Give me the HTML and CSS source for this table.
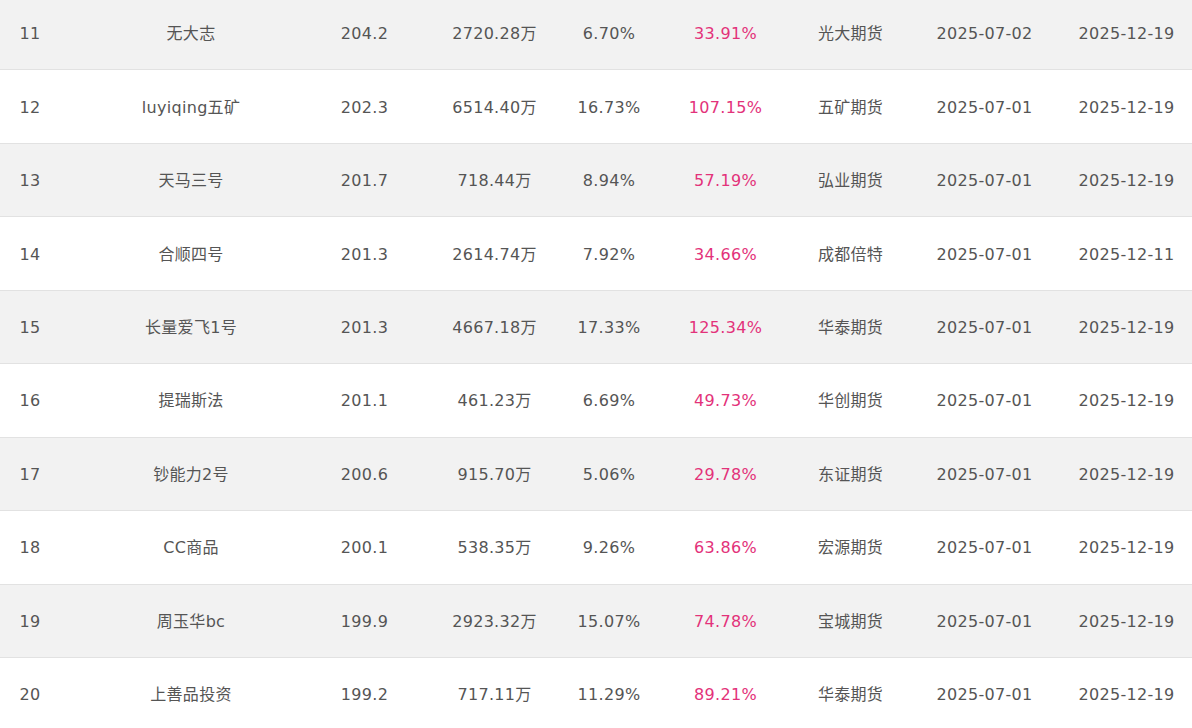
FILE: index.html
```html
<!DOCTYPE html>
<html lang="zh-CN">
<head>
<meta charset="utf-8">
<title>排行榜</title>
<link rel="stylesheet" href="styles.css">
</head>
<body>
<div class="table">
  <div class="row odd"><div class="c rank">11</div><div class="c name">无大志</div><div class="c">204.2</div><div class="c amt">2720.28万</div><div class="c">6.70%</div><div class="c pink">33.91%</div><div class="c">光大期货</div><div class="c">2025-07-02</div><div class="c">2025-12-19</div></div>
  <div class="row"><div class="c rank">12</div><div class="c name">luyiqing五矿</div><div class="c">202.3</div><div class="c amt">6514.40万</div><div class="c">16.73%</div><div class="c pink">107.15%</div><div class="c">五矿期货</div><div class="c">2025-07-01</div><div class="c">2025-12-19</div></div>
  <div class="row odd"><div class="c rank">13</div><div class="c name">天马三号</div><div class="c">201.7</div><div class="c amt">718.44万</div><div class="c">8.94%</div><div class="c pink">57.19%</div><div class="c">弘业期货</div><div class="c">2025-07-01</div><div class="c">2025-12-19</div></div>
  <div class="row"><div class="c rank">14</div><div class="c name">合顺四号</div><div class="c">201.3</div><div class="c amt">2614.74万</div><div class="c">7.92%</div><div class="c pink">34.66%</div><div class="c">成都倍特</div><div class="c">2025-07-01</div><div class="c">2025-12-11</div></div>
  <div class="row odd"><div class="c rank">15</div><div class="c name">长量爱飞1号</div><div class="c">201.3</div><div class="c amt">4667.18万</div><div class="c">17.33%</div><div class="c pink">125.34%</div><div class="c">华泰期货</div><div class="c">2025-07-01</div><div class="c">2025-12-19</div></div>
  <div class="row"><div class="c rank">16</div><div class="c name">提瑞斯法</div><div class="c">201.1</div><div class="c amt">461.23万</div><div class="c">6.69%</div><div class="c pink">49.73%</div><div class="c">华创期货</div><div class="c">2025-07-01</div><div class="c">2025-12-19</div></div>
  <div class="row odd"><div class="c rank">17</div><div class="c name">钞能力2号</div><div class="c">200.6</div><div class="c amt">915.70万</div><div class="c">5.06%</div><div class="c pink">29.78%</div><div class="c">东证期货</div><div class="c">2025-07-01</div><div class="c">2025-12-19</div></div>
  <div class="row"><div class="c rank">18</div><div class="c name">CC商品</div><div class="c">200.1</div><div class="c amt">538.35万</div><div class="c">9.26%</div><div class="c pink">63.86%</div><div class="c">宏源期货</div><div class="c">2025-07-01</div><div class="c">2025-12-19</div></div>
  <div class="row odd"><div class="c rank">19</div><div class="c name">周玉华bc</div><div class="c">199.9</div><div class="c amt">2923.32万</div><div class="c">15.07%</div><div class="c pink">74.78%</div><div class="c">宝城期货</div><div class="c">2025-07-01</div><div class="c">2025-12-19</div></div>
  <div class="row"><div class="c rank">20</div><div class="c name">上善品投资</div><div class="c">199.2</div><div class="c amt">717.11万</div><div class="c">11.29%</div><div class="c pink">89.21%</div><div class="c">华泰期货</div><div class="c">2025-07-01</div><div class="c">2025-12-19</div></div>
</div>
</body>
</html>
```
FILE: styles.css
```css
html, body {
  margin: 0;
  padding: 0;
  background: #ffffff;
}
body {
  font-family: "DejaVu Sans", "Noto Sans CJK SC", sans-serif;
  font-size: 16px;
  color: #555555;
  overflow: hidden;
}
.table {
  margin-top: -3px;
}
.row {
  display: grid;
  grid-template-columns: 60px 262px 85px 153px 98px 135px 115px 153px 131px;
  height: 73.44px;
  box-sizing: border-box;
  border-bottom: 1px solid #e2e2e2;
  background: #ffffff;
}
.row.odd {
  background: #f2f2f2;
}
.c {
  display: flex;
  align-items: center;
  justify-content: center;
  white-space: nowrap;
  letter-spacing: 0.3px;
  padding-bottom: 2px;
}
.c:nth-child(1),
.c:nth-child(3),
.c:nth-child(5),
.c:nth-child(6),
.c:nth-child(8),
.c:nth-child(9) {
  padding-top: 3px;
}
.amt {
  padding-left: 22px;
}
.pink {
  color: #e3327a;
}
```
